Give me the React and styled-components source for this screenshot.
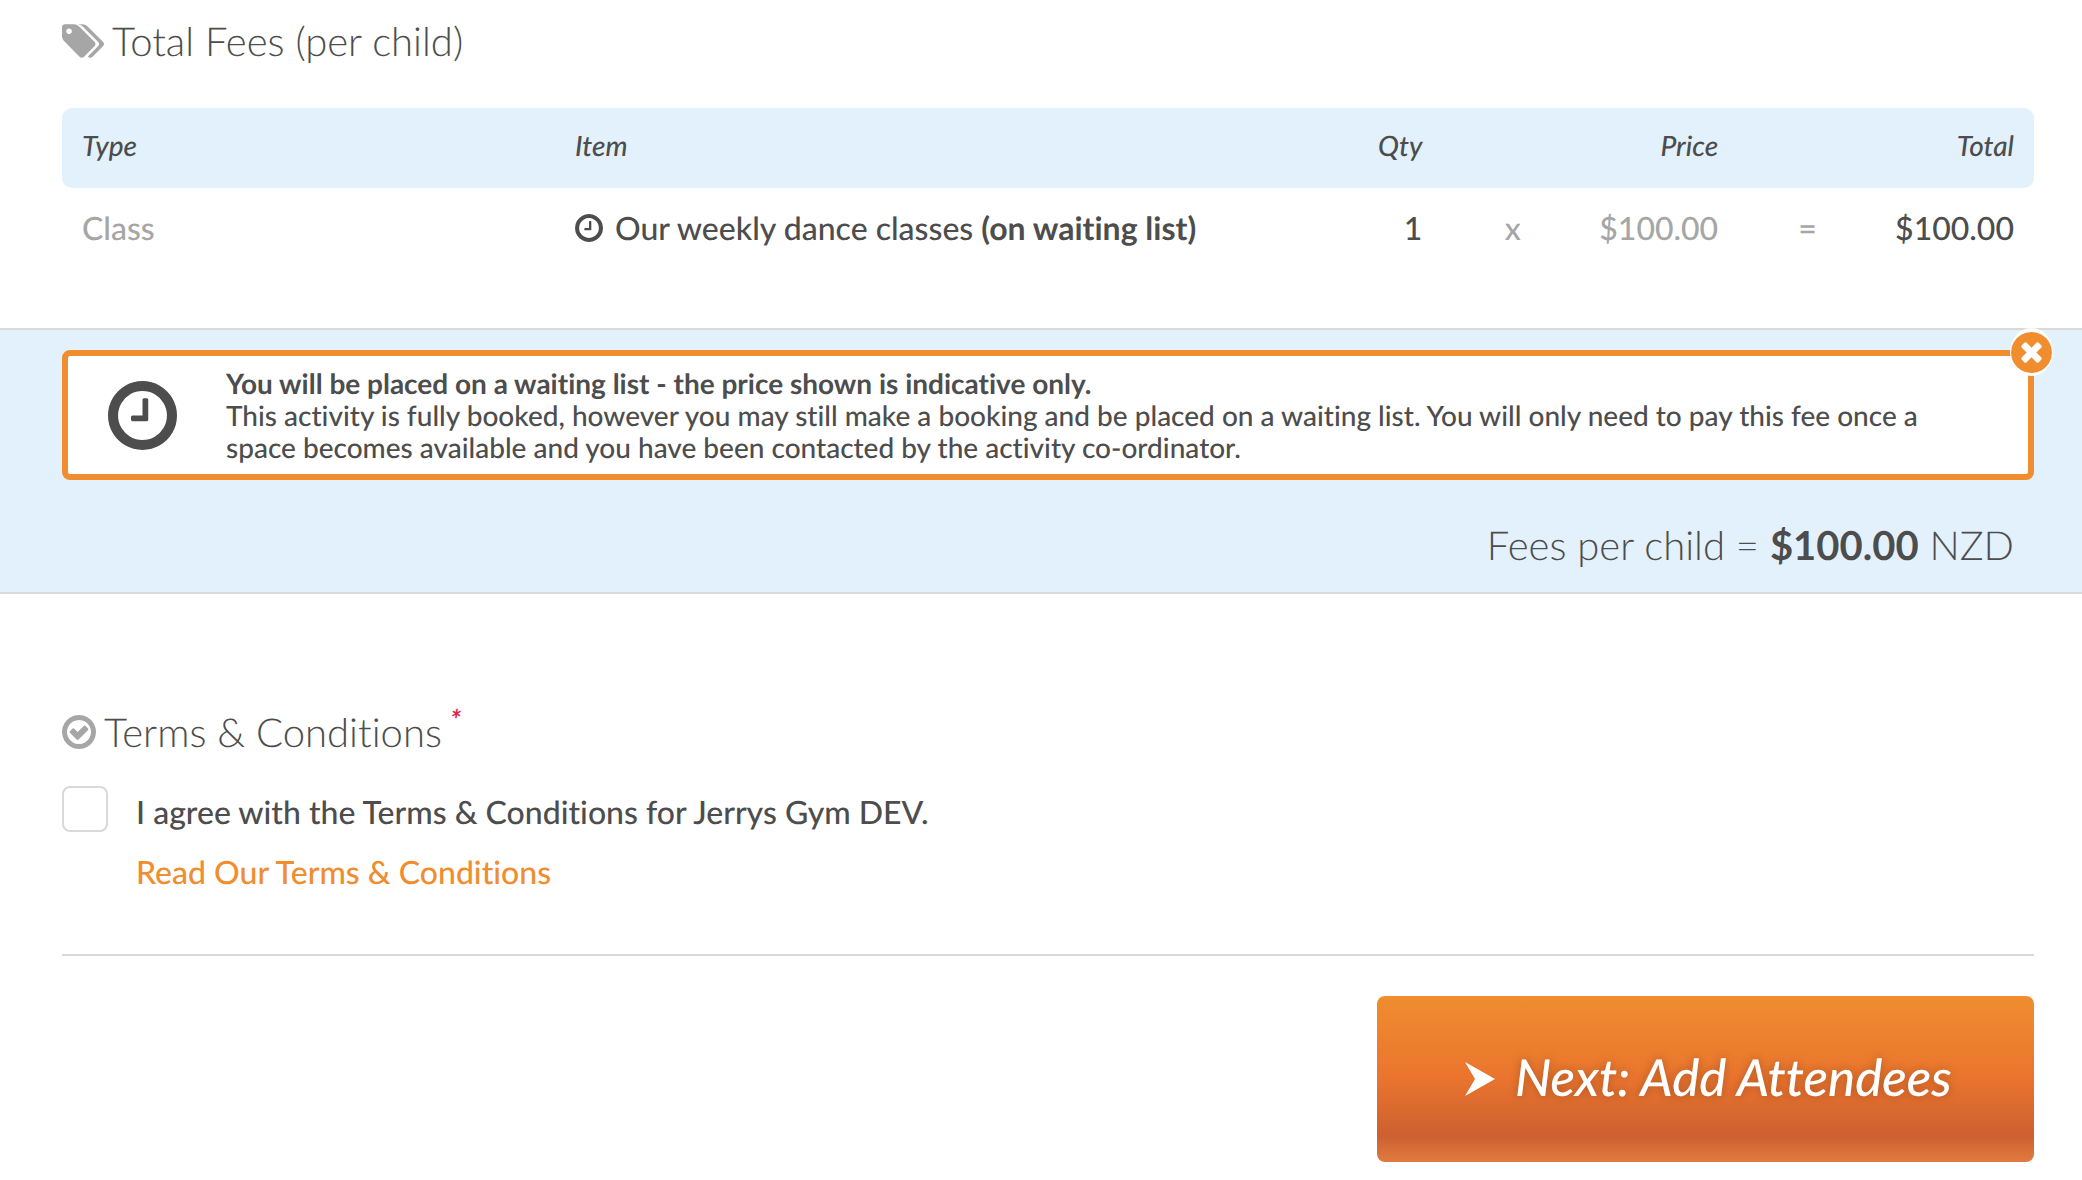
import { useState } from 'react';
import styled, { createGlobalStyle } from 'styled-components';

const GlobalStyle = createGlobalStyle`
	* {
		box-sizing: border-box;
	}
	body {
		margin: 0;
		background-color: #ffffff;
		color: #4d4d4d;
		font-family: Lato, 'Liberation Sans', sans-serif;
		font-size: 32px;
		font-variant-ligatures: none;
		line-height: 40px;
		text-rendering: geometricPrecision;
	}
`;

const Page = styled.main`
	padding-bottom: 18px;
`;

const Section = styled.section`
	padding: 0 48px 0 62px;
`;

const Heading = styled.h2`
	display: flex;
	align-items: center;
	gap: 8px;
	margin: 0;
	font-size: 40px;
	font-weight: 300;
	line-height: 46px;
	svg {
		fill: #a6a6a6;
	}
`;

const Required = styled.sup`
	align-self: flex-start;
	color: #dc2850;
	font-size: 28px;
	font-style: italic;
	font-weight: 700;
	line-height: 20px;
`;

const FeesSection = styled(Section)`
	padding-top: 18px;
	padding-bottom: 70px;
`;

const FeesTable = styled.table`
	width: 100%;
	margin-top: 44px;
	table-layout: fixed;
	border-collapse: separate;
	border-spacing: 0;
`;

const HeadCell = styled.th`
	width: ${(props) => props.$width};
	height: 80px;
	padding: 0 20px 6px;
	background-color: #e3f1fc;
	font-size: 28px;
	font-style: italic;
	font-weight: 500;
	text-align: ${(props) => props.$align || 'left'};
	&:first-child {
		border-radius: 10px 0 0 10px;
	}
	&:last-child {
		border-radius: 0 10px 10px 0;
	}
`;

const Cell = styled.td`
	padding: 20px 20px 10px;
	font-weight: 500;
	color: ${(props) => (props.$muted ? '#a6a6a6' : 'inherit')};
	text-align: ${(props) => props.$align || 'left'};
`;

const ItemName = styled.span`
	display: flex;
	align-items: center;
	gap: 12px;
`;

const Summary = styled(Section)`
	padding-top: 20px;
	padding-bottom: 24px;
	background-color: #e3f1fc;
	border-top: 2px solid #d9d9d9;
	border-bottom: 2px solid #d9d9d9;
`;

const Notice = styled.div`
	position: relative;
	display: flex;
	align-items: center;
	gap: 49px;
	padding: 11px 96px 11px 40px;
	background-color: #ffffff;
	border: 6px solid #ef8d2f;
	border-radius: 8px;
	svg {
		flex-shrink: 0;
	}
`;

const NoticeText = styled.p`
	margin: 0;
	font-size: 28px;
	font-weight: 500;
	line-height: 32px;
	strong {
		display: block;
		font-weight: 700;
	}
`;

const CloseButton = styled.button`
	position: absolute;
	top: -28px;
	right: -25px;
	display: flex;
	align-items: center;
	justify-content: center;
	width: 43px;
	height: 48px;
	padding: 0;
	background-color: #ffffff;
	border: 0;
	border-radius: 50%;
	cursor: pointer;
	svg {
		fill: #ef8d2f;
	}
`;

const FeeTotal = styled.p`
	margin: 42px 0 0;
	padding-right: 20px;
	font-size: 40px;
	font-weight: 300;
	line-height: 46px;
	text-align: right;
	strong {
		font-weight: 700;
	}
`;

const TermsSection = styled(Section)`
	padding-top: 115px;
`;

const Agree = styled.div`
	display: flex;
	align-items: flex-start;
	gap: 28px;
	margin-top: 31px;
`;

const Checkbox = styled.input`
	appearance: none;
	flex-shrink: 0;
	width: 46px;
	height: 46px;
	margin: 0;
	background-color: #ffffff;
	border: 2px solid #d9d9d9;
	border-radius: 8px;
	&:checked {
		background-color: #ef8d2f;
	}
`;

const AgreeText = styled.div`
	display: flex;
	flex-direction: column;
	align-items: flex-start;
	gap: 20px;
	padding-top: 6px;
	font-weight: 500;
`;

const TermsLink = styled.a`
	color: #ef8d2f;
	text-decoration: none;
`;

const Actions = styled.div`
	display: flex;
	justify-content: flex-end;
	margin-top: 62px;
	padding-top: 40px;
	border-top: 2px solid #d9d9d9;
`;

const NextButton = styled.button`
	display: flex;
	align-items: center;
	justify-content: center;
	gap: 20px;
	width: 33.333%;
	height: 166px;
	padding: 0 0 4px 6px;
	background-image: linear-gradient(#ef8d2f 0%, #ea742e 50%, #cc6030 84%, #e07b40 100%);
	border: 0;
	border-radius: 8px;
	color: #ffffff;
	font-family: inherit;
	font-size: 51px;
	font-style: italic;
	font-variant-ligatures: none;
	font-weight: 500;
	line-height: 64px;
	text-rendering: inherit;
	text-shadow: 0 0 10px rgba(0, 0, 0, 0.25);
	cursor: pointer;
	svg {
		margin-top: 4px;
		fill: #ffffff;
	}
`;

const RING =
	'M1440 896q0-148-73-273t-198-198-273-73-273 73-198 198-73 273 73 273 198 198 273 73 273-73 198-198 73-273zm224 0q0 209-103 385.5t-279.5 279.5-385.5 103-385.5-103-279.5-279.5-103-385.5 103-385.5 279.5-279.5 385.5-103 385.5 103 279.5 279.5 103 385.5z';

const TagsIcon = () => (
	<svg width="42" height="34" viewBox="0 128 1899 1515" aria-hidden="true">
		<path d="M448 448q0-53-37.5-90.5t-90.5-37.5-90.5 37.5-37.5 90.5 37.5 90.5 90.5 37.5 90.5-37.5 37.5-90.5zm1067 576q0 53-37 90l-491 492q-39 37-91 37-53 0-90-37l-715-716q-38-37-64.5-101t-26.5-117v-416q0-52 38-90t90-38h416q53 0 117 26.5t102 64.5l715 714q37 39 37 91zm384 0q0 53-37 90l-491 492q-39 37-91 37-36 0-59-14t-53-45l470-470q37-37 37-90 0-52-37-91l-715-714q-38-38-102-64.5t-117-26.5h224q53 0 117 26.5t102 64.5l715 714q37 39 37 91z" />
	</svg>
);

const ClockIcon = ({ size }) => (
	<svg width={size} height={size} viewBox="128 128 1536 1536" fill="#4d4d4d" aria-hidden="true">
		<path d="M1024 544v448q0 14-9 23t-23 9h-320q-14 0-23-9t-9-23v-64q0-14 9-23t23-9h224v-352q0-14 9-23t23-9h64q14 0 23 9t9 23z" />
		<path d={RING} />
	</svg>
);

const CheckCircleIcon = () => (
	<svg width="34" height="34" viewBox="128 128 1536 1536" aria-hidden="true">
		<path d="M1299 813l-422 422q-19 19-45 19t-45-19l-294-294q-19-19-19-45t19-45l102-102q19-19 45-19t45 19l147 147 275-275q19-19 45-19t45 19l102 102q19 19 19 45t-19 45z" />
		<path d={RING} />
	</svg>
);

const CloseIcon = () => (
	<svg width="41" height="41" viewBox="128 128 1536 1536" aria-hidden="true">
		<path d="M1277 1122q0-26-19-45l-181-181 181-181q19-19 19-45 0-27-19-46l-90-90q-19-19-46-19-26 0-45 19l-181 181-181-181q-19-19-45-19-27 0-46 19l-90 90q-19 19-19 46 0 26 19 45l181 181-181 181q-19 19-19 45 0 27 19 46l90 90q19 19 46 19 26 0 45-19l181-181 181 181q19 19 45 19 27 0 46-19l90-90q19-19 19-46zm387-226q0 209-103 385.5t-279.5 279.5-385.5 103-385.5-103-279.5-279.5-103-385.5 103-385.5 279.5-279.5 385.5-103 385.5 103 279.5 279.5 103 385.5z" />
	</svg>
);

const ArrowIcon = () => (
	<svg width="30" height="34" viewBox="0 0 30 34" aria-hidden="true">
		<path d="M0 0L30 17L0 34L10 17z" />
	</svg>
);

export default () => {
	const [agreed, setAgreed] = useState(false);
	const [showNotice, setShowNotice] = useState(true);
	return (
		<Page>
			<GlobalStyle />
			<FeesSection>
				<Heading>
					<TagsIcon />
					Total Fees (per child)
				</Heading>
				<FeesTable>
					<thead>
						<tr>
							<HeadCell $width="25%">Type</HeadCell>
							<HeadCell $width="35%">Item</HeadCell>
							<HeadCell $width="10%" $align="right">Qty</HeadCell>
							<HeadCell $width="5%" />
							<HeadCell $width="10%" $align="right">Price</HeadCell>
							<HeadCell $width="5%" />
							<HeadCell $width="10%" $align="right">Total</HeadCell>
						</tr>
					</thead>
					<tbody>
						<tr>
							<Cell $muted>Class</Cell>
							<Cell>
								<ItemName>
									<ClockIcon size={28} />
									<span>
										Our weekly dance classes <strong>(on waiting list)</strong>
									</span>
								</ItemName>
							</Cell>
							<Cell $align="right">1</Cell>
							<Cell $muted $align="right">x</Cell>
							<Cell $muted $align="right">$100.00</Cell>
							<Cell $muted $align="right">=</Cell>
							<Cell $align="right">$100.00</Cell>
						</tr>
					</tbody>
				</FeesTable>
			</FeesSection>
			<Summary>
				{showNotice && (
					<Notice>
						<ClockIcon size={69} />
						<NoticeText>
							<strong>You will be placed on a waiting list - the price shown is indicative only.</strong>
							This activity is fully booked, however you may still make a booking and be placed on a waiting
							list. You will only need to pay this fee once a space becomes available and you have been
							contacted by the activity co-ordinator.
						</NoticeText>
						<CloseButton type="button" aria-label="Close" onClick={() => setShowNotice(false)}>
							<CloseIcon />
						</CloseButton>
					</Notice>
				)}
				<FeeTotal>
					Fees per child = <strong>$100.00</strong> NZD
				</FeeTotal>
			</Summary>
			<TermsSection>
				<Heading>
					<CheckCircleIcon />
					Terms & Conditions
					<Required>*</Required>
				</Heading>
				<Agree>
					<Checkbox
						id="agree"
						type="checkbox"
						checked={agreed}
						onChange={(e) => setAgreed(e.target.checked)}
					/>
					<AgreeText>
						<label htmlFor="agree">I agree with the Terms & Conditions for Jerrys Gym DEV.</label>
						<TermsLink href="#terms">Read Our Terms & Conditions</TermsLink>
					</AgreeText>
				</Agree>
				<Actions>
					<NextButton type="button">
						<ArrowIcon />
						Next: Add Attendees
					</NextButton>
				</Actions>
			</TermsSection>
		</Page>
	);
};
